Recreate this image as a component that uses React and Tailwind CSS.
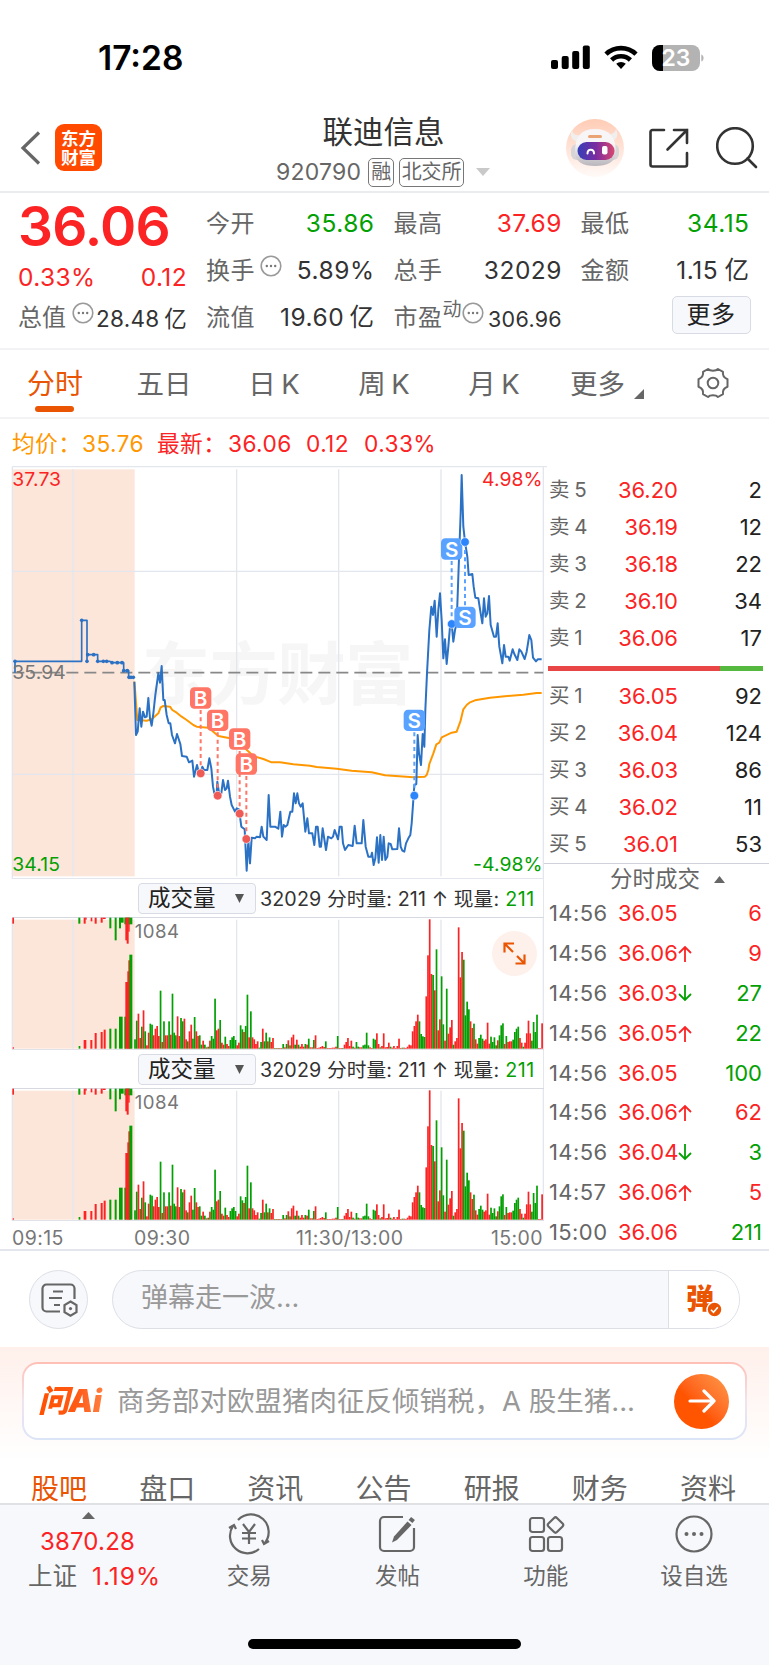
import React from "react";

const tabs = ["五日", "日 K", "周 K", "月 K"];

const asks = [
  ["卖 5", "36.20", "2"],
  ["卖 4", "36.19", "12"],
  ["卖 3", "36.18", "22"],
  ["卖 2", "36.10", "34"],
  ["卖 1", "36.06", "17"],
];

const bids = [
  ["买 1", "36.05", "92"],
  ["买 2", "36.04", "124"],
  ["买 3", "36.03", "86"],
  ["买 4", "36.02", "11"],
  ["买 5", "36.01", "53"],
];

const trades = [
  { time: "14:56", price: "36.05", dir: "", vol: "6", buy: true },
  { time: "14:56", price: "36.06", dir: "up", vol: "9", buy: true },
  { time: "14:56", price: "36.03", dir: "down", vol: "27", buy: false },
  { time: "14:56", price: "36.05", dir: "up", vol: "22", buy: false },
  { time: "14:56", price: "36.05", dir: "", vol: "100", buy: false },
  { time: "14:56", price: "36.06", dir: "up", vol: "62", buy: true },
  { time: "14:56", price: "36.04", dir: "down", vol: "3", buy: false },
  { time: "14:57", price: "36.06", dir: "up", vol: "5", buy: true },
  { time: "15:00", price: "36.06", dir: "", vol: "211", buy: false },
];

const preOpenLine = "45,638 45,604 245,604 245,481 261,481 261,604 261,584 293,584 293,604 330,604 336,608 371,608 371,632 386,632 386,652 402,652";
const preOpenDots = [
  [45, 604], [245, 481], [261, 604], [263, 584], [281, 584], [293, 604], [310, 604], [320, 604], [336, 608],
  [352, 608], [366, 608], [371, 632], [382, 632], [387, 652], [393, 652], [400, 652],
];

const priceLine =
  "403,665 408,825 413,815 419,745 424,800 429,755 435,772 440,770 445,714 450,775 455,797 460,760 466,705 475,640 480,668 485,618 490,720 494,720 500,765 506,790 511,790 516,825 525,850 531,822 541,852 546,888 560,890 567,907 577,902 582,950 591,915 596,935 602,940 607,920 612,930 622,930 628,895 634,925 639,980 643,1000 650,1000 652,965 658,1005 664,1000 669,960 675,990 680,985 684,962 690,1010 695,1035 705,1055 710,1045 717,1048 724,1100 734,1108 740,1232 745,1140 750,1210 755,1133 765,1135 770,1130 780,1132 785,1100 790,1130 800,1140 806,1005 811,1100 825,1100 835,1106 841,1055 846,1130 851,1095 856,1100 862,1095 871,1055 877,1055 882,1000 887,1030 892,1000 897,1030 902,1040 908,1030 916,1115 922,1075 927,1120 937,1120 943,1155 948,1100 953,1100 959,1160 963,1160 968,1105 978,1170 984,1130 994,1135 999,1130 1004,1110 1014,1138 1019,1100 1025,1100 1029,1150 1035,1170 1045,1155 1058,1158 1064,1097 1070,1150 1085,1150 1090,1080 1097,1160 1105,1190 1113,1190 1116,1178 1121,1215 1126,1195 1131,1132 1136,1208 1141,1125 1146,1200 1151,1130 1156,1200 1162,1190 1166,1150 1172,1152 1177,1168 1192,1167 1197,1105 1202,1160 1207,1172 1213,1175 1218,1150 1225,1135 1231,1125 1235,1090 1240,1020 1243,975 1249,972 1253,825 1257,880 1263,915 1268,822 1273,860 1276,750 1281,640 1288,510 1294,440 1299,465 1304,422 1310,530 1315,450 1320,400 1325,480 1330,595 1335,538 1340,612 1345,560 1350,500 1355,490 1360,545 1365,510 1370,490 1375,350 1382,160 1385,45 1390,200 1395,245 1402,290 1406,345 1417,342 1421,380 1426,413 1435,415 1442,460 1447,490 1452,415 1457,470 1462,460 1467,408 1472,495 1482,530 1488,530 1493,490 1498,560 1507,610 1512,555 1517,590 1525,590 1529,602 1538,568 1543,582 1552,600 1558,568 1564,575 1574,597 1580,575 1588,525 1594,540 1599,593 1608,604 1613,598 1625,598";

const avgLine =
  "403,665 406,700 412,780 440,782 455,778 475,760 482,742 490,738 510,740 517,750 530,758 545,770 560,780 580,795 590,800 625,803 640,815 655,828 690,835 722,850 735,865 760,888 790,897 815,907 840,907 880,913 930,917 950,921 1010,926 1055,932 1115,937 1155,946 1240,952 1275,950 1280,945 1285,930 1288,912 1300,880 1309,853 1318,848 1325,832 1355,818 1370,815 1381,785 1390,748 1400,735 1410,727 1425,721 1470,713 1570,704 1610,699 1625,699";

const marks = [
  { t: "B", x: 602, y: 714, dot: 940 },
  { t: "B", x: 653, y: 781, dot: 1007 },
  { t: "B", x: 719, y: 837, dot: 1061 },
  { t: "B", x: 739, y: 912, dot: 1137 },
  { t: "S", x: 1243, y: 781, dot: 1007 },
  { t: "S", x: 1355, y: 267, dot: 492 },
  { t: "S", x: 1395, y: 472, dot: 246 },
];

// one entry per minute: r = up, g = down, number = bar height
const minuteVolumes =
  "g28 g84 r105 r32 g66 r115 g52 r10 r48 g75 g72 r40 r60 r68 r38 g174 r20 g82 r40 r40 g82 r42 g165 g48 g40 r97 r38 g92 g82 r90 r28 g22 r52 r72 g30 g95 r52 r38 g40 g12 r24 g12 r4 g6 r24 g38 g30 g150 r55 r60 g86 r18 r12 g36 r14 r8 g26 g34 g38 g26 r10 r18 g70 g58 r50 g68 g162 r34 g112 r34 r28 r14 r22 g3 g20 r60 g22 g48 r22 g34 r20 r32 g1 r1 g2 r0 r2 g14 r4 g14 r25 g10 r34 r42 g12 r27 g12 r6 r14 r6 g14 r12 g30 r4 r4 g26 r40 r0 r3 r5 r8 r5 g22 r2 r0 r1 r3 r3 r6 g38 r2 r0 g2 r12 r20 r32 r8 r24 g6 r3 g20 g6 r4 r4 g10 g12 g48 g10 r4 r2 g30 g27 r46 r14 g4 r8 r46 r4 r5 r18 g6 r3 r8 r1 r8 r30 r0 g3 r3 r2 r6 r12 r10 r52 r68 r82 r102 g82 g44 g37 g35 r157 r280 r388 r224 g221 r175 g298 r55 r88 g217 g73 r24 g180 r45 r64 r86 g12 r22 r32 r364 r214 r290 g267 g100 g141 g118 r82 r62 g75 r28 r15 g32 g42 g30 r24 r28 r78 r15 g36 g20 g34 g10 r25 g40 g70 g76 r14 g38 r20 r22 r22 g27 g50 g60 g66 r32 r18 g6 r18 r46 r84 r46 g24 g80 g50 g102 r0 r2 r76".split(" ");

// [x, width, height, colour]
const auctionVolumes = [
  [38, 4, 4, "r"], [236, 5, 8, "g"], [251, 8, 26, "r"], [271, 6, 26, "r"], [284, 6, 47, "r"], [302, 6, 50, "r"],
  [311, 6, 57, "r"], [328, 6, 60, "g"], [344, 6, 60, "g"], [357, 11, 96, "g"], [373, 6, 96, "g"], [376, 8, 200, "r"],
  [382, 6, 232, "r"], [385, 6, 265, "r"], [388, 9, 282, "g"],
];
const auctionUnmatched = [
  [37, 5, 18, "r"], [235, 6, 18, "g"], [251, 6, 18, "r"], [256, 4, 6, "r"], [272, 5, 11, "r"], [284, 6, 18, "r"],
  [302, 6, 15, "r"], [308, 9, 4, "r"], [328, 6, 32, "g"], [344, 6, 68, "g"], [357, 6, 32, "g"], [363, 8, 15, "g"],
  [373, 16, 20, "g"], [376, 6, 68, "r"], [380, 6, 78, "r"], [385, 4, 42, "r"], [388, 9, 20, "g"],
];

const fillOf = (c) => (c === "r" ? "#fb2323" : "#03a003");

const MoreDots = () => (
  <svg className="w-[22px] h-[22px]" viewBox="0 0 22 22" fill="none">
    <circle cx="11" cy="11" r="9.8" stroke="#9a9a9a" strokeWidth="1.6" />
    <circle cx="6.8" cy="11" r="1.2" fill="#777" />
    <circle cx="11" cy="11" r="1.2" fill="#777" />
    <circle cx="15.2" cy="11" r="1.2" fill="#777" />
  </svg>
);

const StatusBar = () => (
  <div className="flex items-center justify-between h-[115px] pl-[98px] pr-[65px]">
    <span className="text-[33.5px] leading-[40px] font-semibold text-black">17:28</span>
    <div className="flex items-center">
      <svg className="w-[39px] h-[25px] mr-[14px]" viewBox="0 0 39 25">
        <rect x="0" y="15" width="7" height="9" rx="2" />
        <rect x="10.7" y="11" width="7" height="13" rx="2" />
        <rect x="21.2" y="6" width="7" height="18" rx="2" />
        <rect x="31.8" y="0.5" width="7" height="23.5" rx="2" />
      </svg>
      <svg className="w-[34px] h-[25px] mr-[13px]" viewBox="0 0 34 25" fill="none" stroke="#000" strokeWidth="4.6">
        <path d="M2 9.2a21.6 21.6 0 0 1 30 0" />
        <path d="M7.6 15a13.6 13.6 0 0 1 18.8 0" />
        <path d="M17 24l-4.8-5.2a7 7 0 0 1 9.6 0z" fill="#000" stroke="none" />
      </svg>
      <svg className="w-[53px] h-[28px]" viewBox="0 0 53 28">
        <path d="M9 1h32a8 8 0 0 1 8 8v10a8 8 0 0 1-8 8H9a8 8 0 0 1-8-8V9a8 8 0 0 1 8-8z" fill="#b3b3b3" />
        <path d="M12 1v26H9a8 8 0 0 1-8-8V9a8 8 0 0 1 8-8z" fill="#000" />
        <path d="M50.3 10.5c3 1 3 6 0 7z" fill="#b3b3b3" />
        <text x="25" y="22" textAnchor="middle" fontSize="23" fontWeight="600" fill="#fff">23</text>
      </svg>
    </div>
  </div>
);

const Robot = () => (
  <svg className="w-[60px] h-[60px]" viewBox="0 0 60 60">
    <defs>
      <linearGradient id="halo" x1="0" y1="0" x2="0" y2="1">
        <stop offset="0" stopColor="#ffccb5" />
        <stop offset="1" stopColor="#fffaf8" />
      </linearGradient>
      <linearGradient id="visor" x1="0" y1="0" x2="1" y2="0">
        <stop offset="0" stopColor="#3540b8" />
        <stop offset="0.5" stopColor="#7a2ba0" />
        <stop offset="1" stopColor="#d9476f" />
      </linearGradient>
      <linearGradient id="helmet" x1="0" y1="0" x2="0" y2="1">
        <stop offset="0.4" stopColor="#f7f5f6" />
        <stop offset="1" stopColor="#b9b6bc" />
      </linearGradient>
    </defs>
    <circle cx="30" cy="30" r="29" fill="url(#halo)" />
    <path d="M7 12c-3 6 0 10 6 12l5-7c-6 1-10 0-11-5zM51 11c3 6 1 10-4 12l-5-7c5 1 8-1 9-5z" fill="#f1eeee" />
    <rect x="6" y="26" width="48" height="16" rx="6" fill="#d8d5d9" />
    <path d="M10 34c0-15 6-23 20-23s21 8 21 23c0 10-9 14-21 14s-20-4-20-14z" fill="url(#helmet)" />
    <rect x="23" y="17" width="14" height="3" rx="1.500" fill="#eaa473" />
    <rect x="12.5" y="24" width="37" height="18" rx="9" fill="url(#visor)" />
    <path d="M22.5 35.500c0-5 6.500-5 6.500 0" fill="none" stroke="#fff" strokeWidth="2" strokeLinecap="round" />
    <rect x="37" y="28" width="5.500" height="8.500" rx="2" fill="#fff" />
  </svg>
);

const Header = () => (
  <div className="flex items-center h-[78px] border-b-2 border-[#ebecee] pl-[20px] pr-[11px] pb-[14px]">
    <svg className="w-[21px] h-[34px] mt-[4px]" viewBox="0 0 21 34" fill="none" stroke="#666" strokeWidth="3.2">
      <path d="M19 1.5L3 17l16 15.5" />
    </svg>
    <div className="w-[47px] h-[47px] ml-[14px] mt-[3px] rounded-[9px] bg-[#ff4a00] flex flex-col items-center justify-center text-white text-[17.5px] leading-[19px] font-bold">
      <span>东方</span>
      <span>财富</span>
    </div>
    <div className="w-[290px] ml-[138px] mt-[13px] flex flex-col items-center">
      <div className="text-[30.5px] leading-[38px] text-[#333] mr-[3px] -mt-[2px]">联迪信息</div>
      <div className="flex items-center h-[40px] w-full pl-[36px] pt-[3px]">
        <span className="text-[23px] leading-[30px] tracking-[0.2px] text-[#666]">920790</span>
        <span className="ml-[7px] h-[29px] border border-[#777] rounded-[5px] px-[2px] text-[20px] leading-[27px] text-[#666]">融</span>
        <span className="ml-[5px] h-[29px] border border-[#777] rounded-[5px] px-[1.5px] text-[20px] leading-[27px] text-[#666]">北交所</span>
        <svg className="w-[14px] h-[8px] ml-[12px]" viewBox="0 0 14 8">
          <path d="M0 0h14L7 8z" fill="#c9c9c9" />
        </svg>
      </div>
    </div>
    <div className="flex items-center ml-auto mt-[3px]">
      <Robot />
      <svg className="w-[42px] h-[42px] ml-[23px]" viewBox="0 0 42 42" fill="none" stroke="#333" strokeWidth="2.6" strokeLinecap="round">
        <path d="M16 3H4.500a2 2 0 0 0-2 2v32.500a2 2 0 0 0 2 2h32.500a2 2 0 0 0 2-2V26M26 3h13v13M39 3L19.500 22.500" />
      </svg>
      <svg className="w-[42px] h-[42px] ml-[26px]" viewBox="0 0 42 42" fill="none" stroke="#333" strokeWidth="2.6" strokeLinecap="round">
        <circle cx="19" cy="19" r="17.800" />
        <path d="M31.500 31.500l8.500 8.500" />
      </svg>
    </div>
  </div>
);

const Stat = ({ label, value, color }) => (
  <div className="flex items-center justify-between h-[47px]">
    <span className="flex items-center text-[#666] text-[24px]">{label}</span>
    <span className={color || "text-[#333]"}>{value}</span>
  </div>
);

const Quote = () => (
  <div className="flex h-[157px] pt-[7px] pl-[18px] border-b-2 border-[#f3f3f5]">
    <div className="w-[169px]">
      <div className="h-[52px] leading-[52px] text-[55px] tracking-[-0.8px] font-semibold text-[#fb2323]">36.06</div>
      <div className="flex justify-between h-[50px] leading-[50px] text-[24.5px] tracking-[0.4px] text-[#fb2323]">
        <span>0.33%</span>
        <span>0.12</span>
      </div>
      <div className="flex items-center justify-between h-[31px] text-[#333] text-[22.5px] whitespace-nowrap">
        <span className="flex items-center text-[24px] text-[#666]">
          总值
          <span className="ml-[6px] mb-[10px]"><MoreDots /></span>
        </span>
        <span className="pt-[3px] tracking-[0.3px] [word-spacing:-2px]">28.48 亿</span>
      </div>
    </div>
    <div className="w-[168.5px] ml-[19px] text-[24.5px] tracking-[0.5px] [word-spacing:-2px]">
      <Stat label="今开" value="35.86" color="text-[#03a003]" />
      <Stat label={<>换手<span className="ml-[5px] mb-[10px]"><MoreDots /></span></>} value="5.89%" />
      <Stat label="流值" value="19.60 亿" />
    </div>
    <div className="w-[168.5px] ml-[19px] text-[24.5px] tracking-[0.5px]">
      <Stat label="最高" value="37.69" color="text-[#fb2323]" />
      <Stat label="总手" value="32029" />
      <Stat
        label={<>市盈<span className="text-[19px] mb-[15px]">动</span><span className="mb-[10px]"><MoreDots /></span></>}
        value="306.96"
        color="text-[#333] text-[21.5px] pt-[4px] tracking-[0.3px]"
      />
    </div>
    <div className="w-[169px] ml-[18.5px] text-[24.5px] tracking-[0.5px] [word-spacing:-1px]">
      <Stat label="最低" value="34.15" color="text-[#03a003]" />
      <Stat label="金额" value="1.15 亿" />
      <div className="flex justify-end -mr-[1px] pt-[2px]">
        <button className="w-[79px] h-[38px] rounded-[5px] border-[1.5px] border-[#d8dbe3] bg-[#f7f8fb] text-[24px] leading-[36px] text-[#222]">更多</button>
      </div>
    </div>
  </div>
);

const PeriodTabs = () => (
  <div className="flex h-[69px] border-b-2 border-[#f3f3f5] text-[27.5px] leading-[68px] text-[#666] pl-[27px]">
    <div className="w-[82px]">
      <div className="h-[56px] text-[28px] text-[#ea5504]">分时</div>
      <div className="w-[39px] h-[6px] ml-[8px] rounded-full bg-[#ea5504]" />
    </div>
    {tabs.map((t) => (
      <div key={t} className="w-[110px] text-center [word-spacing:-2px]">{t}</div>
    ))}
    <div className="flex items-center ml-[21px]">
      更多
      <svg className="w-[10px] h-[10px] ml-[9px] mt-[20px]" viewBox="0 0 10 10">
        <path d="M10 0v10H0z" fill="#666" />
      </svg>
    </div>
    <svg className="w-[34px] h-[34px] ml-auto mr-[39px] mt-[16px]" viewBox="0 0 34 34" fill="none" stroke="#666" strokeWidth="2">
      <circle cx="17" cy="17" r="5.300" />
      <path strokeLinejoin="round" d="M12 3c2 2.200 8 2.200 10 0l5 2.800c-.6 3.300 1 6 4.500 7.400v7.600c-3.500 1.400-5.100 4.100-4.500 7.400L22 31c-2-2.200-8-2.200-10 0l-5-2.800c.6-3.300-1-6-4.500-7.400v-7.600C6 11.800 7.600 9.100 7 5.800z" />
    </svg>
  </div>
);

const PriceChart = () => (
  <svg className="block w-[547px] h-[419px]" viewBox="0 0 1641 1257">
    <rect x="37" y="28" width="367" height="1221" fill="#fce6da" />
    <text x="425" y="716" fontSize="205" fontWeight="700" fill="#f6f6f7" textLength="815">东方财富</text>
    <g stroke="#e3e6ed" strokeWidth="4" fill="none">
      <path d="M37 20H1641M37 20V1256H1630V20" />
      <path d="M219 28V1249M710 28V1249M1016 28V1249M1323 28V1249M37 334H1630M37 943H1630" />
    </g>
    <path d="M37 638H1630" stroke="#888" strokeWidth="5" strokeDasharray="36 18" />
    <g fill="none" strokeLinejoin="round">
      <polyline points={avgLine} stroke="#ff9800" strokeWidth="6" />
      <polyline points={preOpenLine} stroke="#2b71c4" strokeWidth="5" />
      <polyline points={priceLine} stroke="#2b71c4" strokeWidth="6" />
    </g>
    {preOpenDots.map(([x, y]) => (
      <circle key={x} cx={x} cy={y} r="5.500" fill="#2b71c4" />
    ))}
    {marks.map((m) => {
      const color = m.t === "B" ? "#ff7566" : "#5aa2ff";
      const dotColor = m.t === "B" ? "#ee5a55" : "#2d85fb";
      return (
        <g key={m.x}>
          <path d={`M${m.x} ${m.y < m.dot ? m.y + 36 : m.y - 36}V${m.dot}`} stroke={color} strokeWidth="6" strokeDasharray="12 10" />
          <circle cx={m.x} cy={m.dot} r="13" fill={dotColor} stroke="#fff" strokeOpacity="0.6" strokeWidth="3" />
          <rect x={m.x - 32} y={m.y - 32} width="64" height="64" rx="13" fill={color} />
          <text x={m.x} y={m.y + 23} fontSize="62" fontWeight="600" fill="#fff" textAnchor="middle">{m.t}</text>
        </g>
      );
    })}
    <g fontSize="58" letterSpacing="0.300">
      <text x="37" y="78" fill="#fb2323">37.73</text>
      <text x="37" y="656" fill="#777">35.94</text>
      <text x="37" y="1234" fill="#03a003">34.15</text>
      <text x="1628" y="78" fill="#fb2323" textAnchor="end">4.98%</text>
      <text x="1628" y="1234" fill="#03a003" textAnchor="end">-4.98%</text>
    </g>
  </svg>
);

const VolumeHeader = () => (
  <div className="flex items-center h-[38px] w-[532px] ml-[12px] pl-[126px] border-r border-[#e3e6ed] text-[19.7px] text-[#333] whitespace-nowrap">
    <button className="flex items-center w-[118px] h-[31px] rounded-[4px] border-[1.5px] border-[#d8dbe3] bg-[#f7f8fb] pl-[9px] text-[22.5px] leading-[28px] text-[#222]">
      成交量
      <svg className="w-[9px] h-[9px] ml-[19px]" viewBox="0 0 9 9">
        <path d="M0 0h9L4.5 9z" fill="#555" />
      </svg>
    </button>
    <span className="ml-[4px] mt-[3px] tracking-[0.1px]">32029 分时量: 211 ↑ 现量: </span>
    <span className="ml-[6px] mt-[3px] tracking-[0.5px] text-[#03a003]">211</span>
  </div>
);

const VolumeChart = () => (
  <svg className="block w-[547px] h-[133px]" viewBox="0 0 1641 399">
    <rect x="37" y="8" width="367" height="387" fill="#fce6da" />
    <g stroke="#e3e6ed" strokeWidth="4">
      <path d="M37 8V399M219 8V395M710 8V395M1016 8V395M1323 8V395M1630 0V399" />
      <path d="M37 1H1632M37 399H1632" stroke="#d6d9e0" />
    </g>
    {auctionVolumes.map(([x, w, h, c]) => (
      <rect key={x} x={x} y={395 - h} width={w} height={h} fill={fillOf(c)} />
    ))}
    {auctionUnmatched.map(([x, w, h, c]) => (
      <rect key={x} x={x} y="2" width={w} height={h} fill={fillOf(c)} />
    ))}
    {minuteVolumes.map((v, i) => {
      const h = Math.max(2, Number(v.slice(1)));
      return <rect key={i} x={402.5 + i * 5.11} y={395 - h} width="5.11" height={h} fill={fillOf(v[0])} />;
    })}
    <text x="404" y="64" fontSize="56" letterSpacing="1.5" fill="#777">1084</text>
  </svg>
);

const ExpandButton = () => (
  <div className="absolute left-[492px] top-[471px] w-[45px] h-[45px] rounded-full bg-[#fef0ea] flex items-center justify-center">
    <svg className="w-[23px] h-[23px]" viewBox="0 0 23 23" fill="none" stroke="#ea5504" strokeWidth="2.2">
      <path d="M1.500 10.500v-9h9.500M1.500 1.500l8.500 8.500M21.500 12.500v9H12.500M21.500 21.500L14 14" />
    </svg>
  </div>
);

const BookRow = ({ row }) => (
  <div className="flex items-center h-[37px]">
    <span className="w-[43px] text-[20.5px] text-[#666] [word-spacing:-1px]">{row[0]}</span>
    <span className="w-[86px] text-right text-[#fb2323]">{row[1]}</span>
    <span className="flex-1 text-right text-[#222]">{row[2]}</span>
  </div>
);

const Arrow = ({ dir }) => (
  <svg className="w-[14px] h-[17px]" viewBox="0 0 14 17" fill="none" strokeWidth="1.8" stroke={dir === "up" ? "#fb2323" : "#03a003"}>
    {dir === "up" ? <path d="M7 17V2M1 8l6-6 6 6" /> : <path d="M7 0v15M1 9l6 6 6-6" />}
  </svg>
);

const OrderBook = () => (
  <div className="w-[222px] pt-[11px] pl-[1px] text-[22px]">
    <div className="h-[185px] pl-[1px] pr-[7px] mt-[1px]">
      {asks.map((r) => <BookRow key={r[0]} row={r} />)}
    </div>
    <div className="flex h-[5px] mt-[8.5px] w-[215px]">
      <div className="w-[172px] bg-[#e84646]" />
      <div className="flex-1 bg-[#55b83f]" />
    </div>
    <div className="h-[185px] mt-[7px] pl-[1px] pr-[7px]">
      {bids.map((r) => <BookRow key={r[0]} row={r} />)}
    </div>
    <div className="-ml-[5px] border-t border-[#cfd2da] flex items-center h-[38px] pl-[67px] text-[22.5px] leading-[34px] text-[#666] pb-[6px]">
      分时成交
      <svg className="w-[11px] h-[7px] ml-[14px]" viewBox="0 0 11 7">
        <path d="M5.500 0L11 7H0z" fill="#666" />
      </svg>
    </div>
    <div className="pl-[1px] pr-[7px] -mt-[6.5px]">
      {trades.map((t, i) => (
        <div key={i} className="flex items-center h-[39.8px]">
          <span className="w-[69px] tracking-[0.4px] text-[#666]">{t.time}</span>
          <span className="text-[#fb2323]">{t.price}</span>
          {t.dir && <Arrow dir={t.dir} />}
          <span className={`flex-1 text-right ${t.buy ? "text-[#fb2323]" : "text-[#03a003]"}`}>{t.vol}</span>
        </div>
      ))}
    </div>
  </div>
);

const Danmu = () => (
  <div className="flex items-center h-[96px] pl-[29px] pr-[29px] pt-[1px]">
    <div className="w-[59px] h-[59px] rounded-full border-[1.5px] border-[#dcdfe6] bg-[#f7f8fb] flex items-center justify-center">
      <svg className="w-[38px] h-[36px] mt-[2px]" viewBox="0 0 38 36" fill="none" stroke="#666" strokeWidth="2.2">
        <path d="M20 28.500H6.500a4 4 0 0 1-4-4v-19a4 4 0 0 1 4-4h24a4 4 0 0 1 4 4V16" />
        <path d="M13 8.500h10M9 15h13M14 22h6" />
        <path d="M30.500 18.500l6 3.600v7l-6 3.600-6-3.600v-7z" />
        <circle cx="30.500" cy="25.600" r="1.600" fill="#666" stroke="none" />
      </svg>
    </div>
    <div className="flex w-[628px] h-[59px] ml-[24px] rounded-full border-[1.5px] border-[#dcdfe6] bg-[#f7f8fb] overflow-hidden">
      <div className="flex-1 pl-[28px] text-[27px] leading-[54px] text-[#999]">弹幕走一波...</div>
      <div className="w-[71px] border-l-[1.5px] border-[#dcdfe6] bg-white pl-[17px] pt-[11px]">
        <div className="relative w-[36px] h-[36px] text-[28px] leading-[34px] font-black text-[#ea5504]">
          弹
          <svg className="absolute left-[20px] top-[19px] w-[17px] h-[17px]" viewBox="0 0 17 17">
            <circle cx="8.500" cy="8.500" r="7.500" fill="#ea5504" stroke="#fff" strokeWidth="1.500" />
            <path d="M5 8.700l2.500 2.500 4.300-5" fill="none" stroke="#fff" strokeWidth="1.600" />
          </svg>
        </div>
      </div>
    </div>
  </div>
);

const AskAi = () => (
  <div className="h-[114px] pt-[15px] px-[22px] bg-linear-to-b from-[#fff0eb] to-white">
    <div className="h-[78px] p-[2px] rounded-[16px] bg-linear-to-b from-[#ffbfb5] via-[#efe4ee] to-[#dbe5f8]">
      <div className="flex items-center h-full rounded-[14px] bg-white pl-[14px] pr-[16px]">
        <div className="w-[79px] text-[31px] font-black italic text-transparent bg-clip-text bg-linear-to-r from-[#ff5000] via-[#ff5a14] to-[#ff9050] tracking-[-0.5px] whitespace-nowrap">
          问Ai
        </div>
        <div className="flex-1 pt-[2px] text-[27.5px] text-[#999] whitespace-nowrap">商务部对欧盟猪肉征反倾销税，A 股生猪...</div>
        <div className="w-[55px] h-[55px] rounded-full bg-linear-to-tr from-[#ff5400] from-40% to-[#ff9a4a] flex items-center justify-center">
          <svg className="w-[28px] h-[24px]" viewBox="0 0 28 24" fill="none" stroke="#fff" strokeWidth="3.2" strokeLinecap="round" strokeLinejoin="round">
            <path d="M2 12h24M16 2l10 10-10 10" />
          </svg>
        </div>
      </div>
    </div>
  </div>
);

const InfoTabs = () => (
  <div className="flex justify-between h-[42px] pl-[31px] pr-[33px] text-[28px] leading-[56px] text-[#666]">
    <span className="text-[#ea5504]">股吧</span>
    {["盘口", "资讯", "公告", "研报", "财务", "资料"].map((t) => (
      <span key={t}>{t}</span>
    ))}
  </div>
);

const NavItem = ({ label, children }) => (
  <div className="w-[148.3px] flex flex-col items-center pt-[8px]">
    <svg className="w-[42px] h-[42px]" viewBox="0 0 42 42" fill="none" stroke="#666" strokeWidth="2.2">
      {children}
    </svg>
    <span className="text-[22.5px] leading-[28px] mt-[7px] text-[#666]">{label}</span>
  </div>
);

const BottomNav = () => (
  <div className="relative h-[163px] bg-[#f7f8fb] border-t-2 border-[#dfe1e5]">
    <div className="flex h-[133px]">
      <div className="w-[175px] flex flex-col items-center pt-[7px]">
        <svg className="w-[13px] h-[7px] ml-[2px]" viewBox="0 0 13 7">
          <path d="M6.500 0L13 7H0z" fill="#666" />
        </svg>
        <span className="text-[24px] leading-[30px] mt-[8px] tracking-[0.2px] text-[#fb2323]">3870.28</span>
        <span className="flex text-[24.5px] leading-[34px] mt-[2px] ml-[14px] text-[#666]">
          上证<span className="ml-[15px] tracking-[1px] text-[#fb2323]">1.19%</span>
        </span>
      </div>
      <NavItem label="交易">
        <path d="M10 7a17.500 17.500 0 0 1 26 24M31 36A17.500 17.500 0 0 1 5 13M1 15l5-3 2 4M41 28l-5 3-2-4" />
        <path d="M15 11l6 8 6-8M21 19v12M14 20h14M14 25.500h14" />
      </NavItem>
      <NavItem label="发帖">
        <path d="M27 4H8a4 4 0 0 0-4 4v26a4 4 0 0 0 4 4h26a4 4 0 0 0 4-4V15" />
        <path d="M34.500 8.500L37 5.500" strokeWidth="5" />
        <path d="M31.500 8.500l4 3.500-14.500 15-5 2.500 2-6z" fill="#666" stroke="none" />
      </NavItem>
      <NavItem label="功能">
        <rect x="5" y="5" width="14" height="14" rx="2.500" />
        <rect x="5" y="24" width="14" height="14" rx="2.500" />
        <rect x="23" y="24" width="14" height="14" rx="2.500" />
        <rect x="24.500" y="6" width="12" height="12" rx="2" transform="rotate(45 30.500 12)" />
      </NavItem>
      <NavItem label="设自选">
        <circle cx="21" cy="21" r="17.500" />
        <g fill="#666" stroke="none">
          <circle cx="13.500" cy="21" r="2" />
          <circle cx="21" cy="21" r="2" />
          <circle cx="28.500" cy="21" r="2" />
        </g>
      </NavItem>
    </div>
    <div className="w-[273px] h-[10px] ml-[248px] mt-[1px] rounded-full bg-black" />
  </div>
);

const App = () => {
  return (
    <div className="w-[769px] h-[1665px] overflow-hidden bg-white font-['Inter','Noto_Sans_CJK_SC',sans-serif]">
      <StatusBar />
      <Header />
      <Quote />
      <PeriodTabs />
      <div className="flex h-[41px] pl-[12px] text-[22.7px] leading-[49px] text-[#fb2323] whitespace-nowrap tracking-[0.4px]">
        <span className="w-[70px] text-[#ff9800]">均价：</span>
        <span className="w-[75px] text-[#ff9800]">35.76</span>
        <span className="w-[71px]">最新：</span>
        <span className="w-[78px]">36.06</span>
        <span className="w-[58px]">0.12</span>
        <span>0.33%</span>
      </div>
      <div className="flex h-[791px] border-b-2 border-[#e3e6ed]">
        <div className="relative w-[547px]">
          <PriceChart />
          <VolumeHeader />
          <VolumeChart />
          <VolumeHeader />
          <VolumeChart />
          <ExpandButton />
          <div className="flex justify-between w-[531px] ml-[12px] text-[19.5px] leading-[35px] tracking-[0.4px] text-[#777]">
            <span className="w-[122px]">09:15</span>
            <span className="w-[162px]">09:30</span>
            <span className="flex-1">11:30/13:00</span>
            <span>15:00</span>
          </div>
        </div>
        <OrderBook />
      </div>
      <Danmu />
      <AskAi />
      <InfoTabs />
      <BottomNav />
    </div>
  );
};

export default App;
